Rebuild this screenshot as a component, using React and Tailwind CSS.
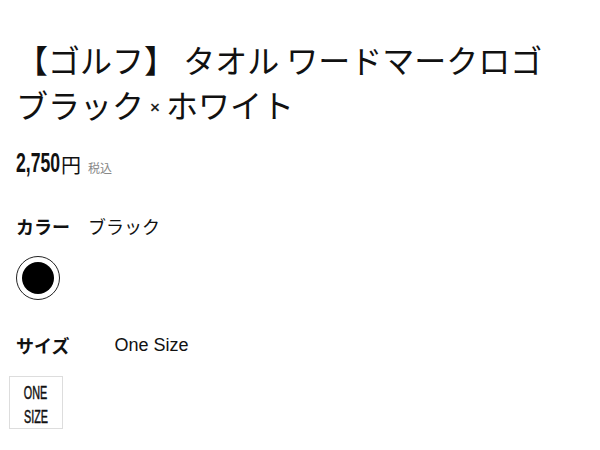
export default function App() {
  return (
    <div className="min-h-[450px] bg-white px-4 pt-[37px] text-[#111] font-['Noto_Sans_CJK_JP',sans-serif]">
      {/* Title */}
      <h1 className="text-[32px] leading-[45px] font-normal">
        【ゴルフ】 タオル ワードマークロゴ
        <br />
        ブラック
        <span className="mx-[6px] align-[5px] text-[17px] font-['Liberation_Sans',sans-serif] [-webkit-text-stroke:0.4px]">×</span>
        ホワイト
      </h1>

      {/* Price */}
      <div className="mt-[19px] flex h-[28px] items-end">
        <span className="inline-block origin-left scale-x-[0.63] -mr-[25px] text-[28px] leading-[28px] font-bold font-['Liberation_Sans',sans-serif]">
          2,750
        </span>
        <span className="text-[20px] leading-[24px]">円</span>
        <span className="ml-[7px] text-[12px] leading-[18px] text-[#888]">税込</span>
      </div>

      {/* Color */}
      <div className="mt-[39px] flex h-[20px] items-center text-[18px] leading-[20px]">
        <span className="font-bold">カラー</span>
        <span className="ml-[18px]">ブラック</span>
      </div>
      <div className="mt-[20px] flex h-[44px] w-[44px] items-center justify-center rounded-full border border-[#222]">
        <div className="h-[32px] w-[32px] rounded-full bg-black" />
      </div>

      {/* Size */}
      <div className="mt-[35px] flex h-[20px] items-center text-[18px] leading-[20px]">
        <span className="font-bold">サイズ</span>
        <span className="ml-[45px] font-['Liberation_Sans',Arial,sans-serif]">One Size</span>
      </div>
      <div className="-ml-[7px] mt-[21px] flex h-[53px] w-[54px] flex-col items-center justify-center border border-[#ddd] pt-[5px] font-['Liberation_Sans',sans-serif] [-webkit-text-stroke:0.5px]">
        <span className="inline-block scale-x-[0.6] text-[18px] leading-[24px]">ONE</span>
        <span className="inline-block scale-x-[0.6] text-[18px] leading-[24px]">SIZE</span>
      </div>
    </div>
  )
}
